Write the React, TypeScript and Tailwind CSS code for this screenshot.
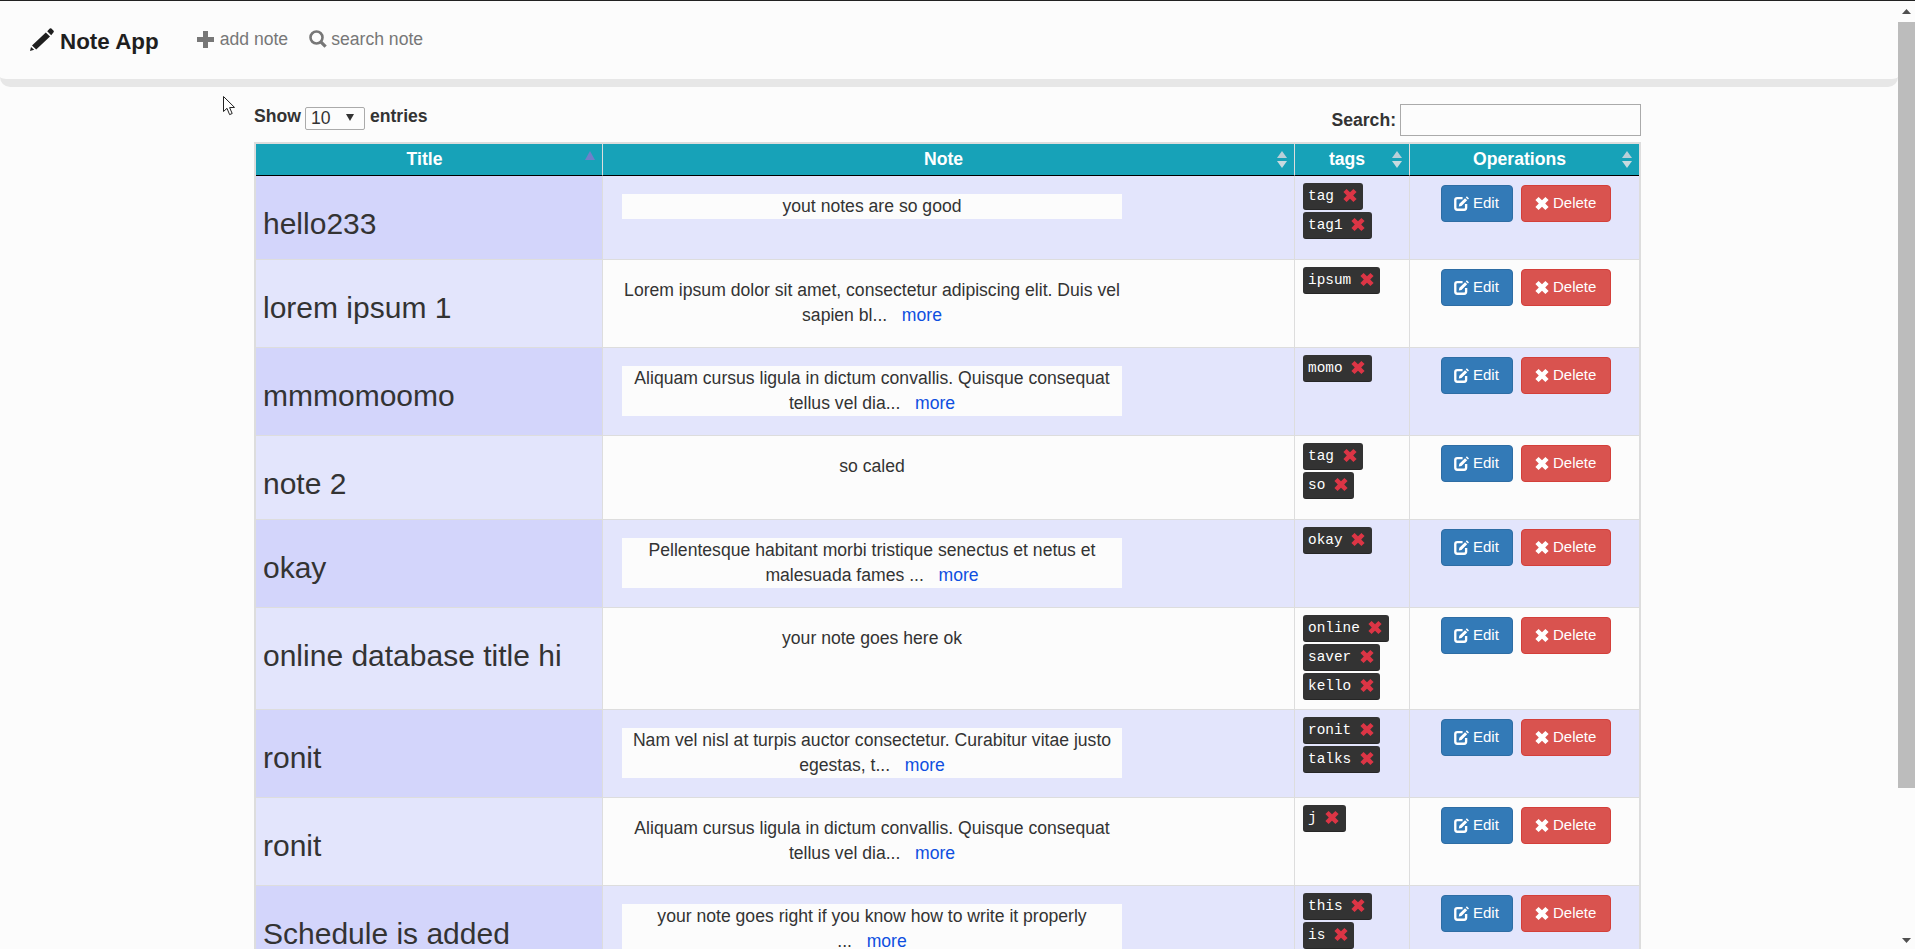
import React from 'react';

interface Note {
  title: string;
  note: string;
  more?: boolean;
  tags: string[];
  height: string;
}

const notes: Note[] = [
  { title: 'hello233', note: 'yout notes are so good', tags: ['tag', 'tag1'], height: 'h-[84px]' },
  { title: 'lorem ipsum 1', note: 'Lorem ipsum dolor sit amet, consectetur adipiscing elit. Duis vel sapien bl...', more: true, tags: ['ipsum'], height: 'h-[88px]' },
  { title: 'mmmomoomo', note: 'Aliquam cursus ligula in dictum convallis. Quisque consequat tellus vel dia...', more: true, tags: ['momo'], height: 'h-[88px]' },
  { title: 'note 2', note: 'so caled', tags: ['tag', 'so'], height: 'h-[84px]' },
  { title: 'okay', note: 'Pellentesque habitant morbi tristique senectus et netus et malesuada fames ...', more: true, tags: ['okay'], height: 'h-[88px]' },
  { title: 'online database title hi', note: 'your note goes here ok', tags: ['online', 'saver', 'kello'], height: 'h-[102px]' },
  { title: 'ronit', note: 'Nam vel nisl at turpis auctor consectetur. Curabitur vitae justo egestas, t...', more: true, tags: ['ronit', 'talks'], height: 'h-[88px]' },
  { title: 'ronit', note: 'Aliquam cursus ligula in dictum convallis. Quisque consequat tellus vel dia...', more: true, tags: ['j'], height: 'h-[88px]' },
  { title: 'Schedule is added', note: 'your note goes right if you know how to write it properly ...', more: true, tags: ['this', 'is'], height: 'h-[88px]' },
];

const RemoveIcon = ({ className }: { className: string }) => (
  <svg viewBox="0 0 14 14" className={className} fill="currentColor">
    <path d="M3.6 0.4 L7 3.8 L10.4 0.4 L13.6 3.6 L10.2 7 L13.6 10.4 L10.4 13.6 L7 10.2 L3.6 13.6 L0.4 10.4 L3.8 7 L0.4 3.6 Z" />
  </svg>
);

const EditIcon = () => (
  <svg viewBox="0 0 14 14" className="w-[15px] h-[15px] shrink-0 text-white" fill="none">
    <path d="M8 2 H3 Q1.2 2 1.2 3.8 V11 Q1.2 12.8 3 12.8 H9.5 Q11.3 12.8 11.3 11 V7.5" stroke="currentColor" strokeWidth="2.2" />
    <path d="M4.5 9.8 L5 7.3 L10.3 2 L12.3 4 L7 9.3 Z M11 1.3 L12 0.3 L14 2.3 L13 3.3 Z" fill="currentColor" />
  </svg>
);

const PencilIcon = () => (
  <svg viewBox="0 0 24 23" className="w-[24px] h-[23px] shrink-0 text-[#1f1f1f]" fill="currentColor">
    <path d="M0 23 L1 19 L4.2 21.8 Z M2 17.6 L15.8 4.6 L20 8.6 L6.2 21.6 Z M17.2 3.2 L19.8 0.6 Q20.6 0 21.4 0.6 L23.6 2.8 Q24.2 3.6 23.6 4.2 L21.2 7.2 Z" />
  </svg>
);

const PlusIcon = () => (
  <svg viewBox="0 0 17 17" className="w-[17px] h-[17px] shrink-0 text-[#777777]" fill="currentColor">
    <path d="M6 0 H11 V6 H17 V11 H11 V17 H6 V11 H0 V6 H6 Z" />
  </svg>
);

const SearchIcon = () => (
  <svg viewBox="0 0 18 18" className="w-[18px] h-[18px] shrink-0 text-[#777777]" fill="none">
    <circle cx="7.5" cy="7.5" r="6" stroke="currentColor" strokeWidth="2.6" />
    <path d="M11.8 11.8 L16.6 16.6" stroke="currentColor" strokeWidth="3.2" />
  </svg>
);

const SortIcon = () => (
  <svg viewBox="0 0 10 17" className="absolute right-[7px] top-[7px] w-[10px] h-[17px]">
    <path d="M5 0 L10 7 H0 Z" fill="#b9cfd8" />
    <path d="M5 17 L10 10 H0 Z" fill="#c8dadf" />
  </svg>
);

const Tag = ({ label }: { label: string }) => (
  <span className="inline-flex items-center h-[27px] pl-[5px] pr-[6.4px] rounded-[3px] bg-[#333333] text-white text-[14.4px] font-['Liberation_Mono',monospace] shadow-[inset_0_-1px_0_rgba(0,0,0,0.25)]">
    <span className="whitespace-pre">{label} </span>
    <RemoveIcon className="w-[14px] h-[15px] text-[#dc3545] -mt-[3px]" />
  </span>
);

export default function App() {
  return (
    <div className="h-[949px] overflow-hidden bg-[#fcfcfc] text-[#333333] font-['Liberation_Sans',Arial,sans-serif] text-[14px]">
      <div className="h-px bg-[#222222]" />
      <div className="flex h-[948px]">
        <main className="flex-1 min-w-0 relative overflow-hidden">
          <nav className="h-[86px] border-b-[8px] border-[#e7e7e7] rounded-b-[10px] flex items-start pt-[27px] pl-[30px]">
            <PencilIcon />
            <span className="ml-[6px] text-[22.4px] leading-[28px] font-bold text-[#1f1f1f]">Note App</span>
            <div className="ml-[38px] flex items-center gap-[6px] h-[22px] text-[17.6px] text-[#777777]">
              <PlusIcon />
              <span>add note</span>
            </div>
            <div className="ml-[21px] flex items-center gap-[4px] h-[22px] text-[17.6px] text-[#777777]">
              <SearchIcon />
              <span>search note</span>
            </div>
          </nav>

          {/* mouse pointer captured in the screenshot */}
          <svg viewBox="0 0 13 20" className="absolute left-[223px] top-[95px] w-[13px] h-[20px]">
            <path d="M0.5 0.5 V15.5 L4 12.3 L6.6 18.6 L9.2 17.5 L6.6 11.6 L11.5 11.4 Z" fill="#ffffff" stroke="#222222" strokeWidth="1" />
          </svg>

          <div className="ml-[254px] w-[1387px]">
            <div className="h-[55px] flex justify-between items-start text-[17.6px] font-bold">
              <div className="flex items-center gap-[4px] mt-[17px] h-[25px]">
                <span>Show</span>
                <div className="relative w-[60px] h-[23px]">
                  <select className="appearance-none w-full h-full border border-[#aaaaaa] rounded-[2px] pl-[5px] pb-[2px] text-[17.6px] leading-[20px] font-normal bg-[#fcfcfc] text-[#333333]">
                    <option>10</option>
                  </select>
                  <svg viewBox="0 0 8 7" className="absolute right-[11px] top-[9px] w-[8px] h-[7px]">
                    <path d="M0 0 H8 L4 7 Z" fill="#333333" />
                  </svg>
                </div>
                <span className="ml-px">entries</span>
              </div>
              <label className="flex items-center gap-[4px] mt-[17px] h-[32px]">
                <span>Search:</span>
                <input type="text" className="w-[241px] h-[32px] border border-[#aaaaaa] bg-[#fcfcfc]" />
              </label>
            </div>

            <table className="w-[1387px] table-fixed border-separate border-spacing-0 border-2 border-[#dddddd] border-b-0">
              <colgroup>
                <col className="w-[347px]" />
                <col className="w-[692px]" />
                <col className="w-[115px]" />
                <col className="w-[229px]" />
              </colgroup>
              <thead>
                <tr className="bg-[#17a2b8] text-white text-[17.6px] font-bold">
                  <th className="relative h-[32px] pr-[9px] border-b border-r border-b-black border-r-[#dddddd]">
                    Title
                    <svg viewBox="0 0 10 9" className="absolute right-[7px] top-[7px] w-[10px] h-[9px]">
                      <path d="M5 0 L10 9 H0 Z" fill="#6f80c9" />
                    </svg>
                  </th>
                  <th className="relative pr-[10px] border-b border-r border-b-black border-r-[#dddddd]">
                    Note
                    <SortIcon />
                  </th>
                  <th className="relative pr-[10px] border-b border-r border-b-black border-r-[#dddddd]">
                    tags
                    <SortIcon />
                  </th>
                  <th className="relative pr-[10px] border-b border-b-black">
                    Operations
                    <SortIcon />
                  </th>
                </tr>
              </thead>
              <tbody>
                {notes.map((n, i) => {
                  const odd = i % 2 === 0;
                  return (
                    <tr key={i} className={odd ? 'bg-[#e3e5fc]' : 'bg-[#fcfcfc]'}>
                      <td className={`${n.height} align-top pl-[7px] pt-[31px] border-b border-r border-[#dddddd] ${odd ? 'bg-[#d3d5fb]' : 'bg-[#e3e5fc]'}`}>
                        <h2 className="text-[30px] leading-[33px] whitespace-nowrap">{n.title}</h2>
                      </td>
                      <td className="align-top pt-[18px] pl-[19px] border-b border-r border-[#dddddd]">
                        <div className={`w-[500px] text-center text-[17.6px] leading-[25px] ${odd ? 'bg-[#fcfcfc]' : ''}`}>
                          {n.note}
                          {n.more && (
                            <a href="#" className="text-[#0f4fe0]">
                              {'\u00a0\u00a0\u00a0'}more
                            </a>
                          )}
                        </div>
                      </td>
                      <td className="align-top pt-[7px] pl-[8px] border-b border-r border-[#dddddd]">
                        <div className="flex flex-col items-start gap-[2px]">
                          {n.tags.map((t) => (
                            <Tag key={t} label={t} />
                          ))}
                        </div>
                      </td>
                      <td className="align-top pt-[9px] pl-[31px] border-b border-[#dddddd]">
                        <div className="flex gap-[8px] text-[15px]">
                          <button className="flex items-center gap-[4px] h-[37px] w-[72px] pl-[12px] rounded-[4px] bg-[#337ab7] border border-[#2e6da4] text-white">
                            <EditIcon />
                            Edit
                          </button>
                          <button className="flex items-center gap-[4px] h-[37px] w-[90px] pl-[13px] rounded-[4px] bg-[#d9534f] border border-[#d43f3a] text-white">
                            <RemoveIcon className="w-[14px] h-[15px] text-white" />
                            Delete
                          </button>
                        </div>
                      </td>
                    </tr>
                  );
                })}
              </tbody>
            </table>
          </div>
        </main>

        {/* page scrollbar */}
        <aside className="w-[17px] shrink-0 flex flex-col items-center">
          <div className="h-[21px] flex items-center justify-center">
            <svg viewBox="0 0 9 5" className="w-[9px] h-[5px]">
              <path d="M4.5 0 L9 5 H0 Z" fill="#505050" />
            </svg>
          </div>
          <div className="w-full h-[766px] bg-[#bcbcbc]" />
          <div className="flex-1 flex items-end pb-[6px]">
            <svg viewBox="0 0 9 5" className="w-[9px] h-[5px]">
              <path d="M0 0 H9 L4.5 5 Z" fill="#505050" />
            </svg>
          </div>
        </aside>
      </div>
    </div>
  );
}
